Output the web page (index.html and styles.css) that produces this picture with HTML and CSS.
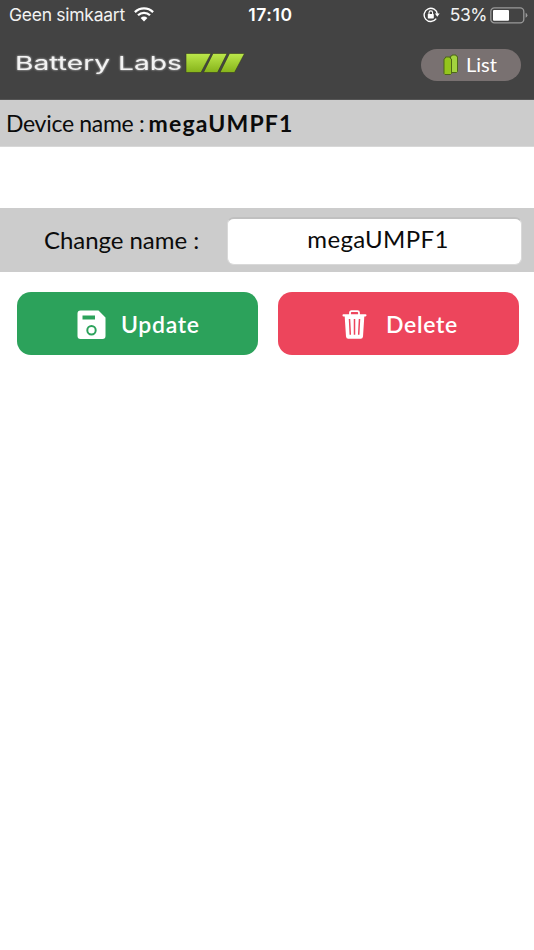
FILE: index.html
```html
<!DOCTYPE html>
<html lang="nl">
<head>
<meta charset="utf-8">
<title>Battery Labs</title>
<link rel="stylesheet" href="styles.css">
</head>
<body>
<header class="top">
  <div class="status">
    <div class="status-left">
      <span class="carrier">Geen simkaart</span>
      <svg class="wifi" width="20" height="15" viewBox="0 0 20 15">
        <path d="M.9 5.100A13 13 0 0 1 19.100 5.100M4 8.300A8.500 8.500 0 0 1 16 8.300" fill="none" stroke="#fff" stroke-width="2.300"/>
        <path d="M6.600 11A5.200 5.200 0 0 1 13.400 11L10 14.400Z" fill="#fff"/>
      </svg>
    </div>
    <span class="clock">17:10</span>
    <div class="status-right">
      <svg class="lock" width="17" height="16" viewBox="0 0 17 16">
        <path d="M13.200 11.600A6.600 6.600 0 1 1 14.300 7.200" fill="none" stroke="#fff" stroke-width="1.400"/>
        <path d="M11.900 6.600H16.700L14.300 9.800Z" fill="#fff"/>
        <rect x="4.800" y="7" width="6" height="4.400" rx=".6" fill="#fff"/>
        <path d="M6 7.200V5.700A1.800 1.800 0 0 1 9.600 5.700V7.200" fill="none" stroke="#fff" stroke-width="1.100"/>
      </svg>
      <span class="percent">53%</span>
      <svg class="battery" width="38" height="17" viewBox="0 0 38 17">
        <rect x=".8" y=".8" width="33" height="15" rx="3.600" fill="none" stroke="#999" stroke-width="1.300"/>
        <rect x="3" y="3" width="16" height="10.800" rx="1" fill="#fff"/>
        <path d="M35.600 5.800Q37.400 6.600 37.400 8.300T35.600 10.800Z" fill="#999"/>
      </svg>
    </div>
  </div>
  <div class="brand-row">
    <svg class="logo" width="232" height="28" viewBox="0 0 232 28">
      <defs>
        <linearGradient id="lime" x1="0" y1="0" x2="0" y2="1">
          <stop offset="0" stop-color="#bce84b"/>
          <stop offset="1" stop-color="#86b31a"/>
        </linearGradient>
      </defs>
      <text class="wordmark" x="1" y="19.500" textLength="167" lengthAdjust="spacingAndGlyphs">Battery Labs</text>
      <path d="M172 3.500H197L187 22.500H172ZM199 3.500H213L203.500 22.500H189.500ZM215.500 3.500H230.500L220.500 22.500H206Z" fill="url(#lime)" stroke="#343a22" stroke-width=".6"/>
    </svg>
    <a class="list-btn">
      <svg width="16" height="22" viewBox="0 0 16 22">
        <path d="M7.500 3V2.200L9 1.800V1H13V1.800L14.500 2.500V17.500L13.500 18.500H7.500Z" fill="#a3d33f" stroke="#4d6718"/>
        <path d="M1 5L2.500 4V3H7V4L8.500 5V19.500L7.500 20.500H2L1 19.500Z" fill="#94c51d" stroke="#4d6718"/>
      </svg>
      <span>List</span>
    </a>
  </div>
</header>
<main>
  <section class="device"><span class="device-label">Device name :</span><strong>megaUMPF1</strong></section>
  <section class="rename">
    <label for="name">Change name :</label>
    <input id="name" class="name-input" type="text" value="megaUMPF1">
  </section>
  <div class="actions">
    <button class="btn update">
      <svg width="29" height="29" viewBox="0 0 29 29">
        <path fill="#fff" fill-rule="evenodd" d="M3.500.500H21.500L28.500 7.500V26Q28.500 29 25.500 29H3.500Q.500 29 .500 26V3.500Q.500.500 3.500.500ZM5.500 5.500V9.500H18V5.500Z"/>
        <circle cx="14.500" cy="20.200" r="4.200" fill="none" stroke="#2ca25b" stroke-width="2"/>
      </svg>
      <span>Update</span>
    </button>
    <button class="btn delete">
      <svg width="25" height="29" viewBox="0 0 25 29">
        <path d="M8 5V2.700Q8 1.200 9.500 1.200H15.500Q17 1.200 17 2.700V5" fill="none" stroke="#fff" stroke-width="1.800"/>
        <path d="M1.500 4.200H23.500Q24.500 4.200 24.500 5.300T23.500 6.500H22.300L21 26.500Q20.800 28.700 18.700 28.700H6.300Q4.200 28.700 4 26.500L2.700 6.500H1.500Q.500 6.500.500 5.300T1.500 4.200Z" fill="#fff"/>
        <path d="M7.500 9L8.300 24.800M12.500 9V24.800M17.500 9L16.700 24.800" stroke="#ed455c" stroke-width="1.500"/>
      </svg>
      <span>Delete</span>
    </button>
  </div>
</main>
</body>
</html>
```
FILE: styles.css
```css
* { box-sizing: border-box; }
body { margin: 0; background: #fff; color: #0b0b0b; font-family: Lato, sans-serif; }
.top { height: 100px; background: #434343; color: #fff; border-bottom: 1px solid #555; }
.status { height: 30px; display: grid; grid-template-columns: 1fr auto 1fr; align-items: center; padding: 0 6px 0 9px; font: 17.5px/30px Inter, sans-serif; }
.status-left, .status-right { display: flex; align-items: center; }
.status-right { justify-content: flex-end; }
.carrier { letter-spacing: -.27px; color: #f2f2f2; }
.wifi { margin-left: 9px; margin-top: -1px; }
.clock { font-weight: 600; letter-spacing: .6px; margin-left: 4px; }
.lock { margin-right: 10px; }
.percent { letter-spacing: -.5px; margin-right: 3px; color: #f2f2f2; }
.brand-row { height: 69px; display: flex; justify-content: space-between; align-items: center; padding: 0 13px 0 14px; }
.logo { margin-top: -2px; overflow: visible; }
.wordmark { font: 400 18.5px Inter, sans-serif; fill: #f3f3f3; filter: drop-shadow(0 0 1px #ccc); }
.list-btn { width: 100px; height: 32px; border-radius: 16px; background: #797171; display: flex; align-items: center; padding: 0 0 1px 22px; gap: 7px; font-size: 20px; }
.list-btn svg { margin-top: 2px; }
.device { height: 47px; background: #ccc; display: flex; align-items: center; padding-left: 6px; gap: 4px; font-size: 23px; border-bottom: 1px solid #d8d8d8; }
.device-label { letter-spacing: -.3px; }
.device strong { letter-spacing: 1.2px; }
.rename { margin-top: 61px; height: 64px; background: #ccc; display: flex; align-items: center; padding: 0 12px 0 44px; font-size: 24px; }
.rename label { width: 183px; letter-spacing: -.05px; padding-bottom: 2px; }
.name-input { width: 295px; height: 48px; margin-top: 1px; padding: 0 0 5px 7px; border: 1px solid #d9d9d9; border-top: 2px solid #c0c0c0; border-radius: 7px; background: #fff; color: #0b0b0b; text-align: center; font: 24px Lato, sans-serif; letter-spacing: .35px; }
.actions { display: flex; gap: 20px; padding: 20px 15px 0 17px; }
.btn { width: 241px; height: 63px; border: 0; border-radius: 14px; display: flex; align-items: center; color: #fff; font: 600 23px Lato, sans-serif; letter-spacing: .7px; }
.btn svg { margin-top: 1px; }
.update { background: #2ca25b; padding: 0 0 0 60px; gap: 15px; }
.delete { background: #ed455c; padding: 0 0 0 64px; gap: 19px; }
```
